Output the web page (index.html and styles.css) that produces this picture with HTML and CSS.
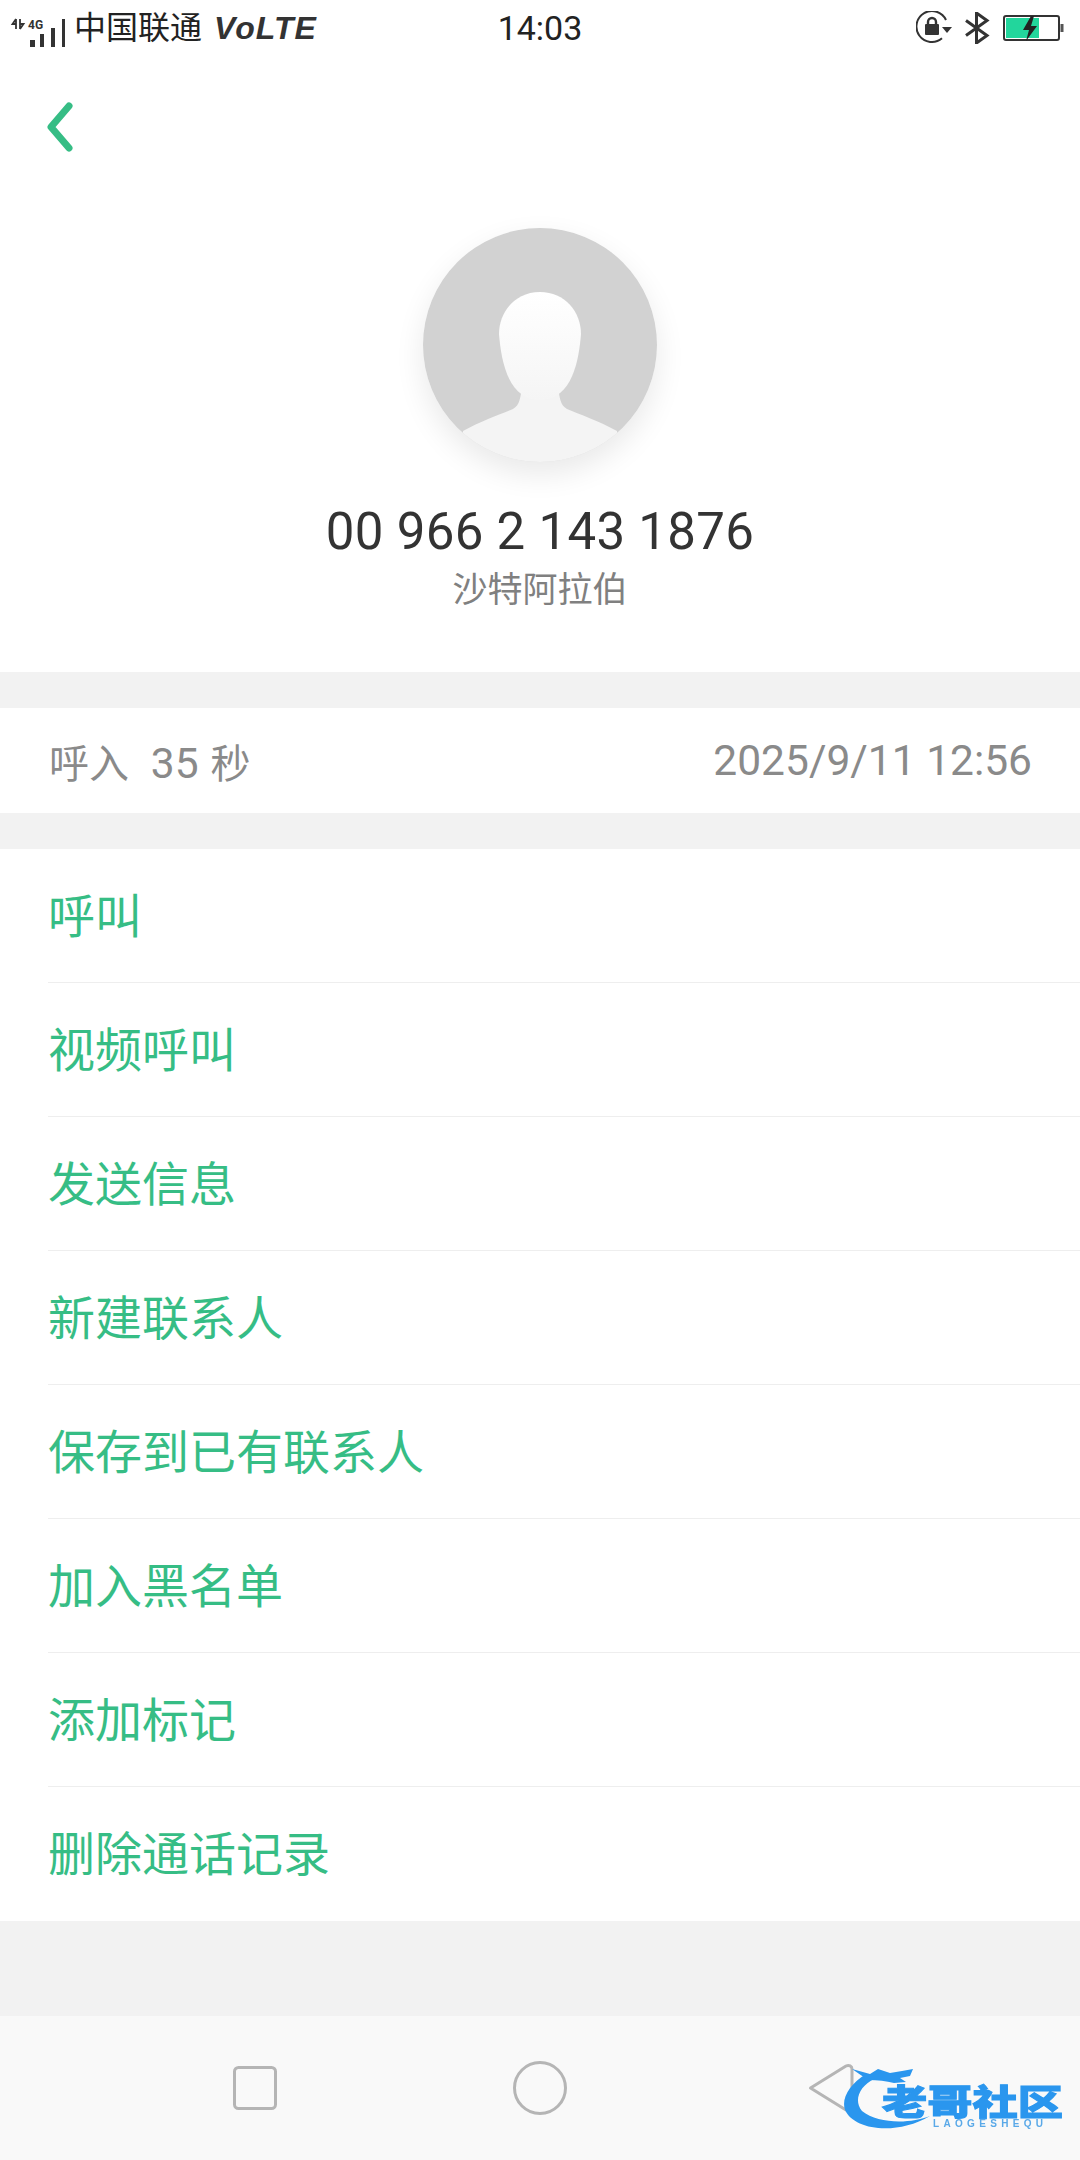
FILE: index.html
```html
<!DOCTYPE html>
<html lang="zh-CN">
<head>
    <meta charset="UTF-8">
    <meta name="viewport" content="width=device-width, initial-scale=1.0">
    <title>通话详情</title>
    <link rel="stylesheet" href="styles.css">
</head>
<body>
<div class="page">
    <div class="status">
        <div class="status-left">
            <svg class="signal" width="74" height="44" viewBox="0 0 74 44">
                <path d="M16 13v10M16 13l-3.500 5h3.500M20 23V13M20 23l3.500-5H20" fill="none" stroke="#333" stroke-width="1.800"/>
                <text x="28" y="23" class="signal-type">4G</text>
                <rect x="30" y="34" width="5" height="7" fill="#333"/>
                <rect x="40" y="28" width="4" height="13" fill="#333"/>
                <rect x="51" y="22" width="4" height="19" fill="#333"/>
                <rect x="62" y="13" width="3" height="28" fill="#333"/>
            </svg>
            <span class="carrier">中国联通</span>
            <span class="volte">VoLTE</span>
        </div>
        <div class="time">14:03</div>
        <div class="status-right">
            <svg width="38" height="34" viewBox="0 0 38 34">
                <path d="M30 9A15.500 15.500 0 1 0 26 27.300" fill="none" stroke="#333" stroke-width="2"/>
                <path d="M26 16h10l-5 6z" fill="#333"/>
                <rect x="9" y="13" width="14" height="11" rx="1" fill="#333"/>
                <path d="M12 13v-2a4 4 0 0 1 8 0v2" fill="none" stroke="#333" stroke-width="2.400"/>
            </svg>
            <svg width="26" height="32" viewBox="0 0 26 32">
                <path d="M2 8.500l21 15L12.500 31V1L23 8.500l-21 15" fill="none" stroke="#333" stroke-width="3"/>
            </svg>
            <svg class="battery" width="62" height="27" viewBox="0 0 62 27">
                <rect x="2" y="1" width="55" height="24" rx="2" fill="#fff" stroke="#333" stroke-width="2"/>
                <rect x="4" y="3" width="33" height="20" fill="#22d69c"/>
                <rect x="58.500" y="9" width="3" height="8" fill="#555"/>
                <path d="M29 1l-8 14h6l-3 11 11-15h-6l3-10z" fill="#222"/>
            </svg>
        </div>
    </div>

    <div class="toolbar">
        <svg width="30" height="52" viewBox="0 0 30 52">
            <path d="M24 5L6 26l18 21" fill="none" stroke="#36bd85" stroke-width="7" stroke-linecap="round" stroke-linejoin="round"/>
        </svg>
    </div>

    <div class="contact">
        <div class="avatar">
            <svg width="234" height="234" viewBox="0 0 234 234">
                <defs>
                    <clipPath id="round"><circle cx="117" cy="117" r="117"/></clipPath>
                    <linearGradient id="face" x1="0" y1="0" x2="0" y2="1">
                        <stop offset="0" stop-color="#fff"/>
                        <stop offset="1" stop-color="#f5f5f5"/>
                    </linearGradient>
                </defs>
                <circle cx="117" cy="117" r="117" fill="#d2d2d2"/>
                <g clip-path="url(#round)">
                    <path d="M99 160C97 170 97 177 90 181C78 186 58 193 40 203L40 240H194L194 203C176 193 156 186 144 181C137 177 137 170 135 160Z" fill="#f4f4f4"/>
                    <path d="M117 64C92 64 76 84 76 106C78 130 84 172 117 172C150 172 156 130 158 106C158 84 142 64 117 64Z" fill="url(#face)"/>
                </g>
            </svg>
        </div>
        <div class="number">00 966 2 143 1876</div>
        <div class="region">沙特阿拉伯</div>
    </div>

    <div class="log-row">
        <span class="log-type">呼入&nbsp; <span class="log-secs">35</span> 秒</span>
        <span class="log-date">2025/9/11 12:56</span>
    </div>

    <ul class="actions">
        <li>呼叫</li>
        <li>视频呼叫</li>
        <li>发送信息</li>
        <li>新建联系人</li>
        <li>保存到已有联系人</li>
        <li>加入黑名单</li>
        <li>添加标记</li>
        <li>删除通话记录</li>
    </ul>

    <div class="navbar">
        <svg width="44" height="44" viewBox="0 0 44 44">
            <rect x="1.500" y="1.500" width="41" height="41" rx="4" fill="none" stroke="#b5b5b5" stroke-width="3"/>
        </svg>
        <svg width="54" height="54" viewBox="0 0 54 54">
            <circle cx="27" cy="27" r="25.500" fill="none" stroke="#b5b5b5" stroke-width="3"/>
        </svg>
        <svg class="nav-back" width="46" height="50" viewBox="0 0 46 50">
            <path d="M2.500 25L38 3c3-1.500 6 0 6 3v38c0 3-3 4.500-6 3z" fill="none" stroke="#b5b5b5" stroke-width="3" stroke-linejoin="round"/>
        </svg>
    </div>

    <svg class="watermark" width="240" height="90" viewBox="0 0 240 90">
        <path d="M26 24C10 34 1 48 5 60C14 80 56 86 90 66C70 74 38 74 22 61C13 50 20 36 34 29Z" fill="#2a96ee"/>
        <path d="M12 19L30 24L38 19L50 23L62 21L73 19L70 26L60 28L66 32L54 33C46 31 38 30 28 30Z" fill="#2a96ee"/>
        <text x="42" y="65" textLength="181" lengthAdjust="spacingAndGlyphs" class="mark-title">老哥社区</text>
        <text x="93" y="77" textLength="110" class="mark-sub">LAOGESHEQU</text>
    </svg>
</div>
</body>
</html>
```

FILE: styles.css
```css
*{margin: 0;padding: 0;box-sizing: border-box;}
ul{list-style: none;}

body{background: #fff;font-family: Roboto, "Noto Sans CJK SC", sans-serif;}
svg{display: block;}

.page{width: 1080px;height: 2160px;position: relative;overflow: hidden;background: #f2f2f2;display: flex;flex-direction: column;}

.status{height: 56px;background: #fff;display: grid;grid-template-columns: 1fr auto 1fr;align-items: center;color: #222;}
.status-left{display: flex;align-items: center;}
.signal{flex: none;}
.signal-type{font: bold 12px Roboto, sans-serif;fill: #333;}
.carrier{font-size: 32px;line-height: 44px;}
.volte{font: italic bold 32px "Liberation Sans", sans-serif;color: #333;margin-left: 12px;letter-spacing: 1px;}
.time{font-size: 34px;}
.status-right{display: flex;justify-content: flex-end;align-items: center;gap: 10px;padding-right: 16px;}
.battery{margin-left: 2px;}

.toolbar{height: 172px;background: #fff;padding: 45px 0 0 45px;}

.contact{height: 444px;background: #fff;display: flex;flex-direction: column;align-items: center;}
.avatar{width: 234px;height: 234px;border-radius: 50%;box-shadow: 0 12px 30px rgba(0,0,0,.09);}
.number{font-size: 51px;line-height: 60px;color: #333;margin-top: 40px;letter-spacing: .3px;}
.region{font-size: 35px;line-height: 50px;color: #808080;margin-top: 4px;}

.log-row{height: 105px;margin-top: 36px;background: #fff;padding: 0 48px 0 49px;display: flex;justify-content: space-between;align-items: center;color: #8a8a8a;}
.log-type{font-size: 40px;}
.log-secs{font-size: 42.500px;margin: 0 2px;}
.log-date{font-size: 42.500px;}

.actions{margin-top: 36px;background: #fff;}
.actions li{height: 134px;margin-left: 48px;padding-top: 3px;border-bottom: 1px solid #eee;font-size: 47px;line-height: 130px;color: #36bd85;}
.actions li:last-child{border-bottom: 0;}

.navbar{margin-top: auto;height: 144px;background: #f9f9f9;display: flex;align-items: center;gap: 236px;padding-left: 233px;}
.nav-back{margin-left: 5px;}

.watermark{position: absolute;left: 840px;top: 2050px;filter: blur(.6px);}
.mark-title{font: 900 35px "Noto Sans CJK SC", sans-serif;fill: #2a96ee;stroke: #2a96ee;stroke-width: 1px;}
.mark-sub{font: bold 10px "Liberation Sans", sans-serif;fill: #5aa9e8;}
```
